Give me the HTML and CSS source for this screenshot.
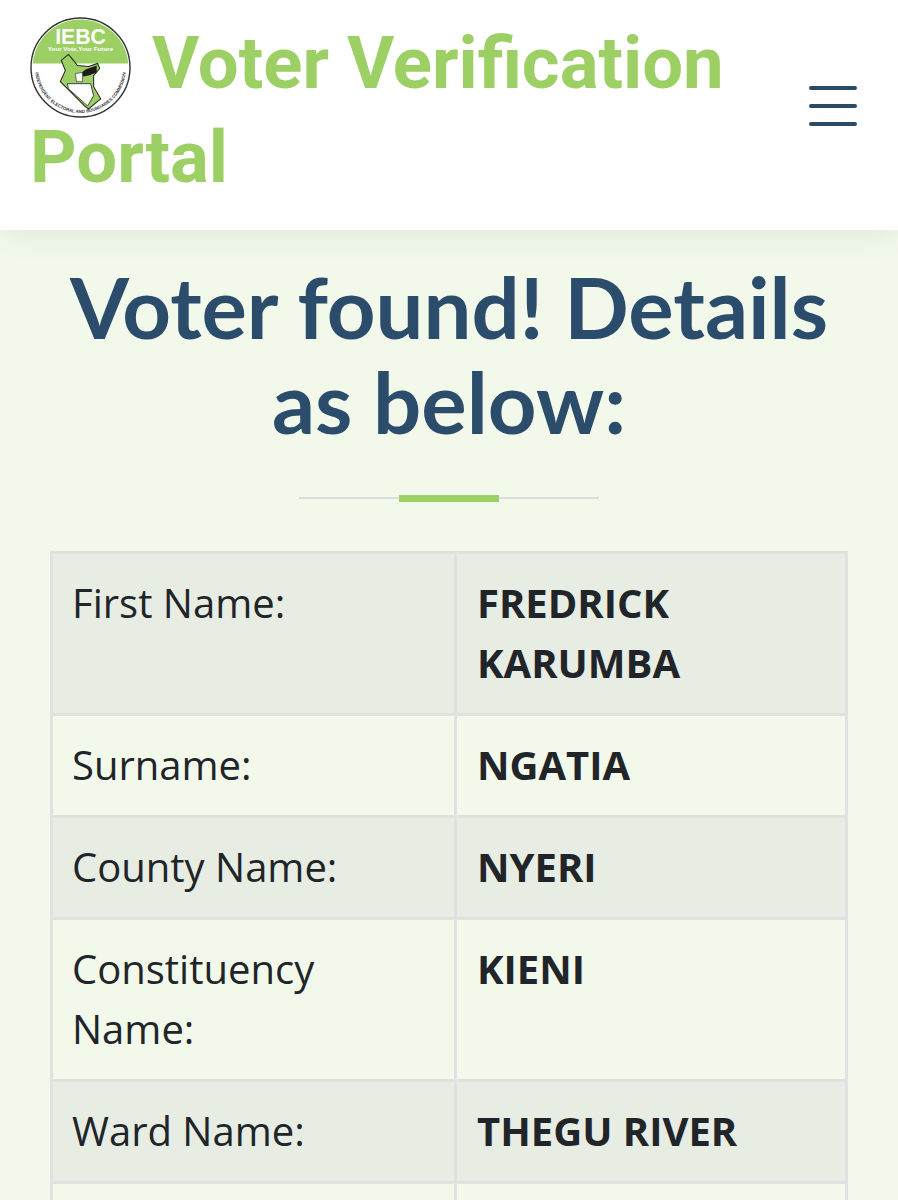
FILE: index.html
```html
<!DOCTYPE html>
<html lang="en">
<head>
<meta charset="utf-8">
<title>Voter Verification Portal</title>
<link rel="stylesheet" href="styles.css">
</head>
<body>
<header class="site-header">
  <a class="brand" href="#">
    <svg class="logo" viewBox="0 0 100 100" aria-hidden="true">
      <defs>
        <clipPath id="top"><rect x="0" y="0" width="100" height="46"/></clipPath>
        <path id="arc" d="M5 50 A45 45 0 0 0 95 50"/>
      </defs>
      <circle cx="50" cy="50" r="49" fill="#fff" stroke="#333" stroke-width="1.4"/>
      <circle cx="50" cy="50" r="47.5" fill="#9ccf64" clip-path="url(#top)"/>
      <text class="logo-title" x="50" y="27" text-anchor="middle">IEBC</text>
      <text class="logo-sub" x="50" y="34" text-anchor="middle">Your Vote,Your Future</text>
      <text class="logo-ring"><textPath href="#arc" startOffset="50%" text-anchor="middle">INDEPENDENT ELECTORAL AND BOUNDARIES COMMISSION</textPath></text>
      <path d="M31 43 L38 37 L43 43 L47 48 L58 49 L67 46 L69 51 L63 58 L63 69 L70 81 L58 91 L55 89 L37 71 L30 64 L35 53 Z" fill="#9ccf64" stroke="#222" stroke-width="1"/>
      <path d="M37 66 L60 66 L63 78 L57 88 L38 71 Z" fill="#fff" stroke="#222" stroke-width=".8"/>
      <path d="M50 56 L55 52 L66 48 L66 55 L58 58 L53 59 Z" fill="#1c1c1c"/>
      <path d="M45 56 L52 55 L52 64 L46 64 Z" fill="#fff" stroke="#222" stroke-width=".6"/>
    </svg>
    <span class="brand-gap"></span>Voter Verification Portal
  </a>
  <button class="menu" type="button" aria-label="Menu">
    <span class="menu-bar"></span>
    <span class="menu-bar"></span>
    <span class="menu-bar"></span>
  </button>
</header>
<main class="content">
  <h2 class="title">Voter found! Details as below:</h2>
  <div class="rule"><span class="rule-mark"></span></div>
  <table class="details">
    <tbody>
      <tr><td class="label">First Name:</td><th class="value">FREDRICK KARUMBA</th></tr>
      <tr><td class="label">Surname:</td><th class="value">NGATIA</th></tr>
      <tr><td class="label">County Name:</td><th class="value">NYERI</th></tr>
      <tr><td class="label">Constituency Name:</td><th class="value">KIENI</th></tr>
      <tr><td class="label">Ward Name:</td><th class="value">THEGU RIVER</th></tr>
      <tr><td class="label">&nbsp;</td><th class="value">&nbsp;</th></tr>
    </tbody>
  </table>
</main>
</body>
</html>
```

FILE: styles.css
```css
html, body {
  margin: 0;
  height: 1200px;
  overflow: hidden;
}
body {
  background: #f2f9eb;
  font-family: "Open Sans", sans-serif;
  color: #212529;
}
.site-header {
  height: 230px;
  box-sizing: border-box;
  background: #fff;
  box-shadow: 0 0 30px rgba(40, 70, 30, 0.12);
  display: flex;
  align-items: flex-start;
  justify-content: space-between;
  padding: 17px 41px 0 30px;
  position: relative;
}
.brand {
  display: block;
  width: 730px;
  font-family: Roboto, sans-serif;
  font-weight: 700;
  font-size: 72.5px;
  line-height: 94px;
  color: #9ccf64;
  text-decoration: none;
}
.logo {
  width: 101px;
  height: 101px;
  margin: -30px 0 -40px;
  vertical-align: 10px;
}
.brand-gap {
  display: inline-block;
  width: 3px;
}
.logo-title {
  font: 700 21px "Liberation Sans", sans-serif;
  fill: #fff;
}
.logo-sub {
  font: 700 6.2px "Liberation Sans", sans-serif;
  fill: #fff;
}
.logo-ring {
  font: 700 4.4px "Liberation Sans", sans-serif;
  fill: #333;
}
.menu {
  margin-top: 69px;
  width: 48px;
  padding: 0;
  border: 0;
  background: none;
  display: flex;
  flex-direction: column;
  gap: 14px;
}
.menu-bar {
  display: block;
  height: 4px;
  border-radius: 2px;
  background: #2a4a68;
}
.content {
  padding: 29px 50px 0;
}
.title {
  margin: 0;
  text-align: center;
  font-family: Lato, sans-serif;
  font-weight: 700;
  font-size: 85px;
  line-height: 95px;
  color: #2b4c6b;
}
.rule {
  width: 300px;
  height: 2px;
  margin: 48px auto 52px;
  background: #dddddd;
  display: flex;
  justify-content: center;
  align-items: center;
}
.rule-mark {
  display: block;
  width: 100px;
  height: 7px;
  background: #9ccf64;
}
.details {
  width: 798px;
  border-collapse: collapse;
  table-layout: fixed;
  font-size: 40px;
  line-height: 60px;
}
.label, .value {
  border: 3px solid #dee2e0;
  padding: 19px 19px 20px;
  text-align: left;
  vertical-align: top;
}
.label {
  width: 363px;
  font-weight: 400;
}
.value {
  font-weight: 700;
  padding-left: 20px;
}
tr:nth-child(odd) .label,
tr:nth-child(odd) .value {
  background: #e7ede2;
}
```
